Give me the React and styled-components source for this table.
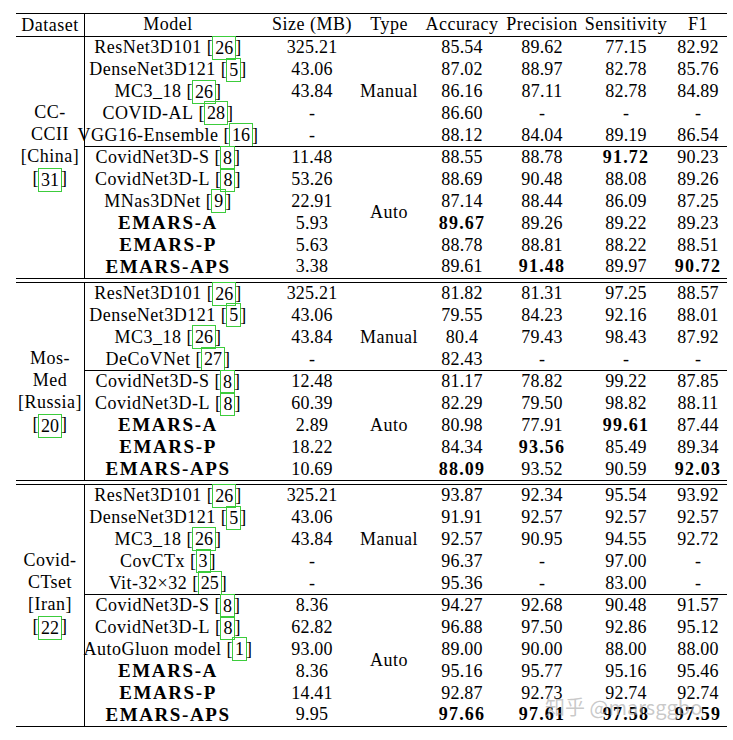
import React from 'react';
import styled, { createGlobalStyle } from 'styled-components';

const COLS = '166px 122px 32px 114px 46px 122px 22px 18px';
const ROW_H = 21.8;

const sections = [
  {
    label: ['CC-', 'CCII', '[China]'],
    cite: '31',
    groups: [
      {
        type: 'Manual',
        span: 1,
        rows: [
          ['ResNet3D101', '26', '325.21', '85.54', '89.62', '77.15', '82.92'],
          ['DenseNet3D121', '5', '43.06', '87.02', '88.97', '82.78', '85.76'],
          ['MC3_18', '26', '43.84', '86.16', '87.11', '82.78', '84.89'],
          ['COVID-AL', '28', '-', '86.60', '-', '-', '-'],
          ['VGG16-Ensemble', '16', '-', '88.12', '84.04', '89.19', '86.54'],
        ],
      },
      {
        type: 'Auto',
        span: 2,
        rows: [
          ['CovidNet3D-S', '8', '11.48', '88.55', '88.78', '*91.72', '90.23'],
          ['CovidNet3D-L', '8', '53.26', '88.69', '90.48', '88.08', '89.26'],
          ['MNas3DNet', '9', '22.91', '87.14', '88.44', '86.09', '87.25'],
          ['EMARS-A', null, '5.93', '*89.67', '89.26', '89.22', '89.23'],
          ['EMARS-P', null, '5.63', '88.78', '88.81', '88.22', '88.51'],
          ['EMARS-APS', null, '3.38', '89.61', '*91.48', '89.97', '*90.72'],
        ],
      },
    ],
  },
  {
    label: ['Mos-', 'Med', '[Russia]'],
    cite: '20',
    groups: [
      {
        type: 'Manual',
        span: 1,
        rows: [
          ['ResNet3D101', '26', '325.21', '81.82', '81.31', '97.25', '88.57'],
          ['DenseNet3D121', '5', '43.06', '79.55', '84.23', '92.16', '88.01'],
          ['MC3_18', '26', '43.84', '80.4', '79.43', '98.43', '87.92'],
          ['DeCoVNet', '27', '-', '82.43', '-', '-', '-'],
        ],
      },
      {
        type: 'Auto',
        span: 1,
        rows: [
          ['CovidNet3D-S', '8', '12.48', '81.17', '78.82', '99.22', '87.85'],
          ['CovidNet3D-L', '8', '60.39', '82.29', '79.50', '98.82', '88.11'],
          ['EMARS-A', null, '2.89', '80.98', '77.91', '*99.61', '87.44'],
          ['EMARS-P', null, '18.22', '84.34', '*93.56', '85.49', '89.34'],
          ['EMARS-APS', null, '10.69', '*88.09', '93.52', '90.59', '*92.03'],
        ],
      },
    ],
  },
  {
    label: ['Covid-', 'CTset', '[Iran]'],
    cite: '22',
    groups: [
      {
        type: 'Manual',
        span: 1,
        rows: [
          ['ResNet3D101', '26', '325.21', '93.87', '92.34', '95.54', '93.92'],
          ['DenseNet3D121', '5', '43.06', '91.91', '92.57', '92.57', '92.57'],
          ['MC3_18', '26', '43.84', '92.57', '90.95', '94.55', '92.72'],
          ['CovCTx', '3', '-', '96.37', '-', '97.00', '-'],
          ['Vit-32×32', '25', '-', '95.36', '-', '83.00', '-'],
        ],
      },
      {
        type: 'Auto',
        span: 2,
        rows: [
          ['CovidNet3D-S', '8', '8.36', '94.27', '92.68', '90.48', '91.57'],
          ['CovidNet3D-L', '8', '62.82', '96.88', '97.50', '92.86', '95.12'],
          ['AutoGluon model', '1', '93.00', '89.00', '90.00', '88.00', '88.00'],
          ['EMARS-A', null, '8.36', '95.16', '95.77', '95.16', '95.46'],
          ['EMARS-P', null, '14.41', '92.87', '92.73', '92.74', '92.74'],
          ['EMARS-APS', null, '9.95', '*97.66', '*97.61', '*97.58', '*97.59'],
        ],
      },
    ],
  },
];

const headers = ['Model', 'Size (MB)', 'Type', 'Accuracy', 'Precision', 'Sensitivity', 'F1'];
// grid column of each value after the model name (column 3 is the Type column)
const valueCols = [2, 4, 5, 6, 7];

function Citation({ n }) {
  return (
    <>
      [<CiteBox>{n}</CiteBox>]
    </>
  );
}

function ModelName({ name, cite, row }) {
  const bold = name.startsWith('EMARS');
  return (
    <Cell $bold={bold} $name $col={1} $row={row}>
      {cite ? (
        <>
          {name}&nbsp;<Citation n={cite} />
        </>
      ) : (
        name
      )}
    </Cell>
  );
}

function Value({ v, col, row }) {
  const bold = v.startsWith('*');
  return (
    <Cell $bold={bold} $col={col} $row={row}>
      {bold ? v.slice(1) : v}
    </Cell>
  );
}

export default function App() {
  return (
    <Page>
      <GlobalStyle />
      <Table>
        <HeaderRow>
          <DatasetHead>Dataset</DatasetHead>
          <Grid>
            {headers.map((h) => (
              <Cell key={h} $name>
                {h}
              </Cell>
            ))}
          </Grid>
        </HeaderRow>
        {sections.map((s, si) => (
          <Section key={si}>
            <DatasetCell>
              {s.label.map((l) => (
                <div key={l}>{l}</div>
              ))}
              <div>
                <Citation n={s.cite} />
              </div>
            </DatasetCell>
            <Groups>
              {s.groups.map((g, gi) => (
                <Group key={gi}>
                  <TypeCell $name $span={g.span}>
                    {g.type}
                  </TypeCell>
                  {g.rows.map((r, ri) => (
                    <React.Fragment key={ri}>
                      <ModelName name={r[0]} cite={r[1]} row={ri + 1} />
                      {r.slice(2).map((v, vi) => (
                        <Value key={vi} v={v} col={valueCols[vi]} row={ri + 1} />
                      ))}
                    </React.Fragment>
                  ))}
                </Group>
              ))}
            </Groups>
          </Section>
        ))}
      </Table>
      <Watermark>知乎 @marsggbo</Watermark>
    </Page>
  );
}

const GlobalStyle = createGlobalStyle`
  html, body {
    margin: 0;
    padding: 0;
    background: #ffffff;
  }
  body {
    font-family: "Liberation Serif", "Times New Roman", serif;
    color: #000;
  }
`;

const Page = styled.div`
  position: relative;
  width: 733px;
  height: 740px;
  padding-top: 13px;
  box-sizing: border-box;
  overflow: hidden;
`;

const Table = styled.div`
  margin-left: 16px;
  width: 711px;
  border-top: 1px solid #000;
  font-size: 18px;
  letter-spacing: 0.5px;
`;

const HeaderRow = styled.div`
  display: flex;
  height: 22px;
  border-bottom: 1px solid #000;
`;

const DatasetHead = styled.div`
  width: 68px;
  flex-shrink: 0;
  border-right: 1px solid #000;
  display: flex;
  align-items: center;
  justify-content: center;
  white-space: nowrap;
`;

const Grid = styled.div`
  display: grid;
  grid-template-columns: ${COLS};
  grid-auto-rows: ${ROW_H}px;
  align-items: stretch;
`;

const Cell = styled.div`
  display: flex;
  align-items: center;
  justify-content: center;
  white-space: nowrap;
  min-width: 0;
  ${(p) => (p.$col ? `grid-column: ${p.$col};` : '')}
  ${(p) => (p.$row ? `grid-row: ${p.$row};` : '')}
  font-weight: ${(p) => (p.$bold ? 700 : 400)};
  font-size: ${(p) => (p.$bold && p.$name ? '19px' : '18px')};
  letter-spacing: ${(p) =>
    p.$bold ? (p.$name ? '1.6px' : '1.2px') : p.$name ? '0.5px' : '0.2px'};
`;

const Section = styled.div`
  display: flex;
  border-bottom: 1px solid #000;

  & + & {
    margin-top: 3px;
    border-top: 1px solid #000;
  }
`;

const DatasetCell = styled.div`
  width: 68px;
  flex-shrink: 0;
  border-right: 1px solid #000;
  padding-top: ${ROW_H * 3}px;
  line-height: ${ROW_H}px;
  text-align: center;
  white-space: nowrap;
`;

const Groups = styled.div`
  flex: 1;
  display: flex;
  flex-direction: column;
`;

const Group = styled(Grid)`
  & + & {
    border-top: 1px solid #000;
  }
`;

const TypeCell = styled(Cell)`
  grid-column: 3;
  grid-row: 3 / span ${(p) => p.$span};
`;

const CiteBox = styled.span`
  display: inline-block;
  height: 22px;
  line-height: 22px;
  padding: 0 2px;
  margin: 0 -1px;
  border: 1px solid #3ccc3c;
  font-size: 18px;
  font-weight: 400;
  letter-spacing: 0;
  vertical-align: middle;
`;

const Watermark = styled.span`
  position: absolute;
  left: 545px;
  top: 692px;
  font-family: "Noto Sans CJK SC", "Noto Sans", sans-serif;
  font-size: 20px;
  color: rgba(165, 165, 165, 0.6);
  white-space: nowrap;
  pointer-events: none;
`;
